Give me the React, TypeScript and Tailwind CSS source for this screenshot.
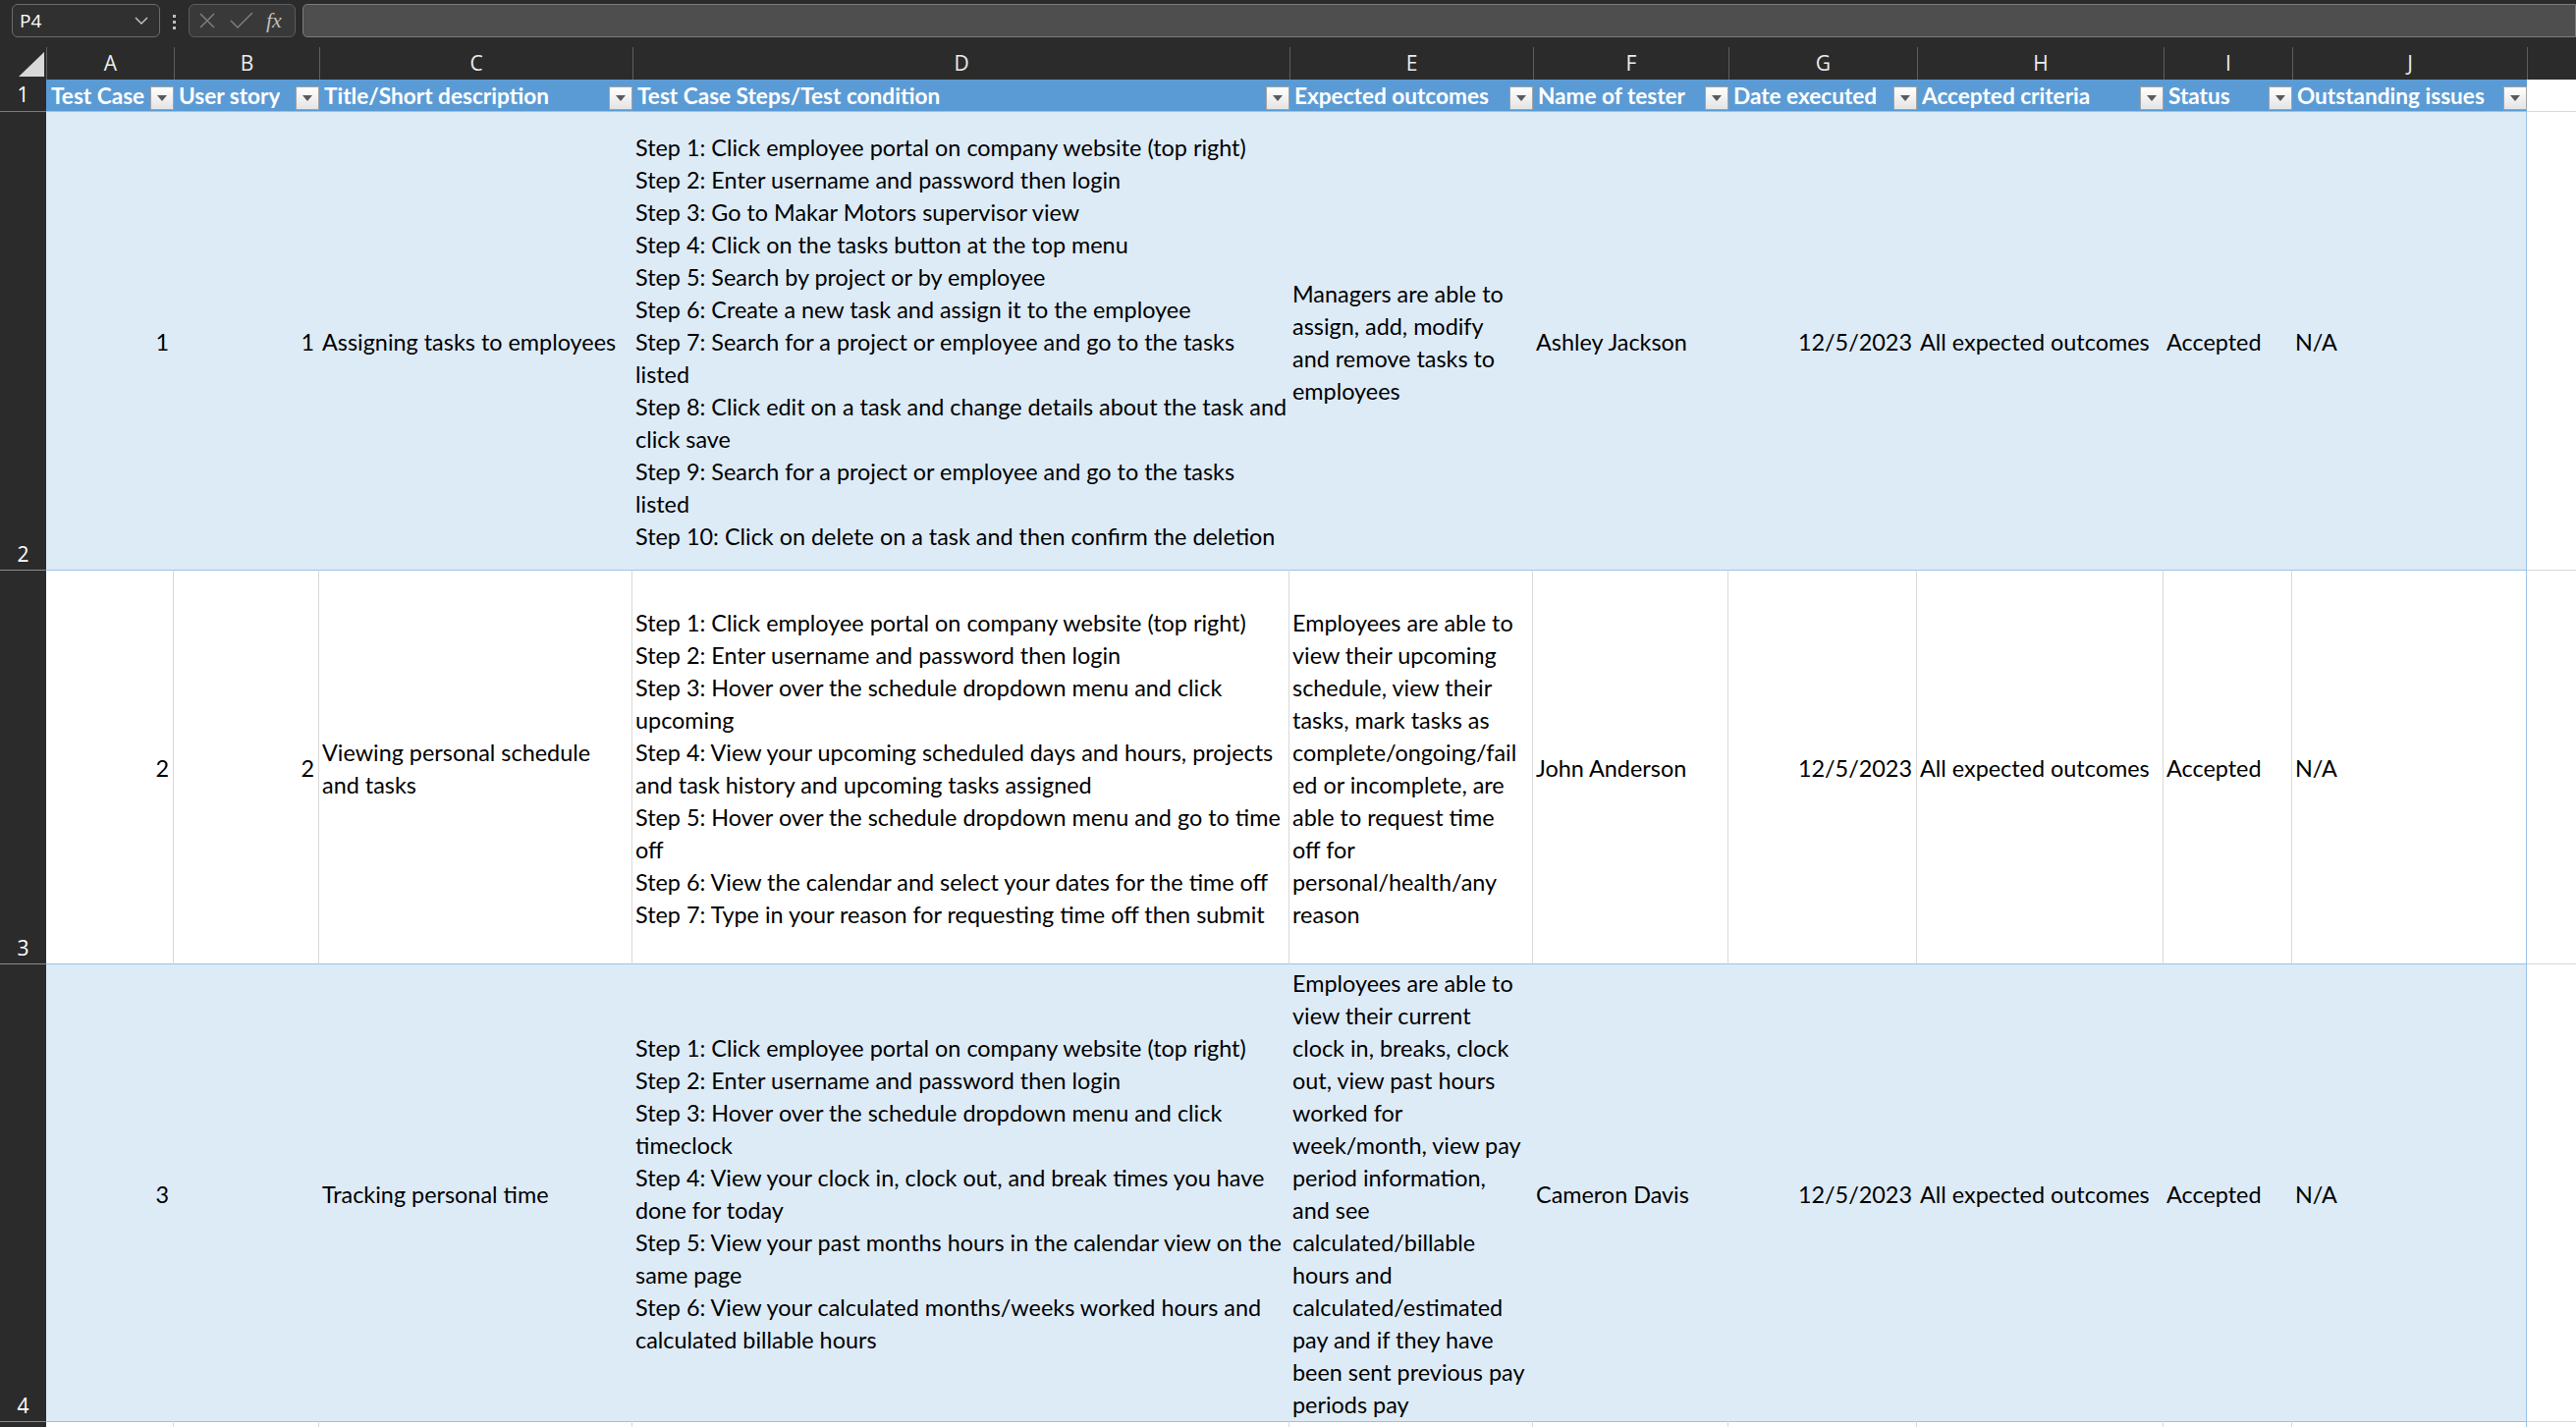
import React from "react";

type Cell = { lines: string[]; right?: boolean };
type Row = { num: string; band: boolean; h: string; cells: Cell[] };

const letters = ["A", "B", "C", "D", "E", "F", "G", "H", "I", "J"];

const headers = [
  "Test Case",
  "User story",
  "Title/Short description",
  "Test Case Steps/Test condition",
  "Expected outcomes",
  "Name of tester",
  "Date executed",
  "Accepted criteria",
  "Status",
  "Outstanding issues",
];

const rows: Row[] = [
  {
    num: "2",
    band: true,
    h: "h-[467px]",
    cells: [
      { lines: ["1"], right: true },
      { lines: ["1"], right: true },
      { lines: ["Assigning tasks to employees"] },
      {
        lines: [
          "Step 1: Click employee portal on company website (top right)",
          "Step 2: Enter username and password then login",
          "Step 3: Go to Makar Motors supervisor view",
          "Step 4: Click on the tasks button at the top menu",
          "Step 5: Search by project or by employee",
          "Step 6: Create a new task and assign it to the employee",
          "Step 7: Search for a project or employee and go to the tasks",
          "listed",
          "Step 8: Click edit on a task and change details about the task and",
          "click save",
          "Step 9: Search for a project or employee and go to the tasks",
          "listed",
          "Step 10: Click on delete on a task and then confirm the deletion",
        ],
      },
      { lines: ["Managers are able to", "assign, add, modify", "and remove tasks to", "employees"] },
      { lines: ["Ashley Jackson"] },
      { lines: ["12/5/2023"], right: true },
      { lines: ["All expected outcomes"] },
      { lines: ["Accepted"] },
      { lines: ["N/A"] },
    ],
  },
  {
    num: "3",
    band: false,
    h: "h-[401px]",
    cells: [
      { lines: ["2"], right: true },
      { lines: ["2"], right: true },
      { lines: ["Viewing personal schedule", "and tasks"] },
      {
        lines: [
          "Step 1: Click employee portal on company website (top right)",
          "Step 2: Enter username and password then login",
          "Step 3: Hover over the schedule dropdown menu and click",
          "upcoming",
          "Step 4: View your upcoming scheduled days and hours, projects",
          "and task history and upcoming tasks assigned",
          "Step 5: Hover over the schedule dropdown menu and go to time",
          "off",
          "Step 6: View the calendar and select your dates for the time off",
          "Step 7: Type in your reason for requesting time off then submit",
        ],
      },
      {
        lines: [
          "Employees are able to",
          "view their upcoming",
          "schedule, view their",
          "tasks, mark tasks as",
          "complete/ongoing/fail",
          "ed or incomplete, are",
          "able to request time",
          "off for",
          "personal/health/any",
          "reason",
        ],
      },
      { lines: ["John Anderson"] },
      { lines: ["12/5/2023"], right: true },
      { lines: ["All expected outcomes"] },
      { lines: ["Accepted"] },
      { lines: ["N/A"] },
    ],
  },
  {
    num: "4",
    band: true,
    h: "h-[466px]",
    cells: [
      { lines: ["3"], right: true },
      { lines: [""], right: true },
      { lines: ["Tracking personal time"] },
      {
        lines: [
          "Step 1: Click employee portal on company website (top right)",
          "Step 2: Enter username and password then login",
          "Step 3: Hover over the schedule dropdown menu and click",
          "timeclock",
          "Step 4: View your clock in, clock out, and break times you have",
          "done for today",
          "Step 5: View your past months hours in the calendar view on the",
          "same page",
          "Step 6: View your calculated months/weeks worked hours and",
          "calculated billable hours",
        ],
      },
      {
        lines: [
          "Employees are able to",
          "view their current",
          "clock in, breaks, clock",
          "out, view past hours",
          "worked for",
          "week/month, view pay",
          "period information,",
          "and see",
          "calculated/billable",
          "hours and",
          "calculated/estimated",
          "pay and if they have",
          "been sent previous pay",
          "periods pay",
        ],
      },
      { lines: ["Cameron Davis"] },
      { lines: ["12/5/2023"], right: true },
      { lines: ["All expected outcomes"] },
      { lines: ["Accepted"] },
      { lines: ["N/A"] },
    ],
  },
];

function FilterButton() {
  return (
    <span className="ml-auto mb-[1px] flex h-[24px] w-[24px] shrink-0 items-center justify-center self-end border border-[#a3a3a3] bg-gradient-to-b from-white to-[#e4e4e4]">
      <svg width="10" height="6" viewBox="0 0 10 6">
        <path d="M0 0h10L5 6z" fill="#5a5a5a" />
      </svg>
    </span>
  );
}

export default function App() {
  return (
    <div className="h-[1453px] w-[2623px] overflow-hidden bg-white font-['Lato','Liberation_Sans',sans-serif] text-[23.4px] text-black">
      {/* formula bar */}
      <div className="flex h-[48px] items-start bg-[#2b2b2b] pt-[4px]">
        <div className="ml-[12px] flex h-[34px] w-[151px] items-center rounded-[6px] border border-[#6b6b6b] bg-[#303030] px-[7px] font-['Open_Sans',sans-serif] text-[19px] text-white">
          P4
          <svg className="ml-auto mr-[4px]" width="14" height="8" viewBox="0 0 14 8">
            <path d="M1 1l6 6 6-6" stroke="#c8c8c8" strokeWidth="1.4" fill="none" />
          </svg>
        </div>
        <div className="ml-[13px] mt-[11px] flex flex-col gap-[3px]">
          <span className="h-[3px] w-[3px] bg-[#bdbdbd]" />
          <span className="h-[3px] w-[3px] bg-[#bdbdbd]" />
          <span className="h-[3px] w-[3px] bg-[#bdbdbd]" />
        </div>
        <div className="ml-[13px] flex h-[34px] w-[109px] items-center rounded-[6px] border border-[#5c5c5c] bg-[#393939] pl-[9px]">
          <svg width="18" height="18" viewBox="0 0 18 18">
            <path d="M2 2l14 14M16 2L2 16" stroke="#7d7d7d" strokeWidth="1.5" />
          </svg>
          <svg className="ml-[14px]" width="24" height="18" viewBox="0 0 24 18">
            <path d="M1 9l7 7L23 1" stroke="#7d7d7d" strokeWidth="1.5" fill="none" />
          </svg>
          <span className="ml-[13px] font-['Liberation_Serif',serif] text-[22px] italic leading-none text-[#bdbdbd]">fx</span>
        </div>
        <div className="ml-[7px] h-[34px] flex-1 rounded-l-[5px] border border-[#7c7c7c] bg-[#4e4e4e]" />
      </div>

      <div className="grid grid-cols-[47px_130px_148px_319px_669px_248px_199px_192px_251px_131px_239px_1fr]">
        {/* column letters */}
        <div className="relative h-[33px] bg-[#2b2b2b]">
          <svg className="absolute left-[19px] top-[5px]" width="26" height="25" viewBox="0 0 26 25">
            <path d="M0 25H26V0z" fill="#d9d9d9" />
          </svg>
        </div>
        {letters.map((l) => (
          <div key={l} className="flex h-[33px] items-center justify-center border-l border-[#5e5e5e] bg-[#2b2b2b] font-['Open_Sans',sans-serif] text-[21px] text-[#ececec]">
            {l}
          </div>
        ))}
        <div className="h-[33px] border-l border-[#5e5e5e] bg-[#2b2b2b]" />

        {/* row 1 headers */}
        <div className="flex h-[33px] items-center justify-center border-b border-[#7a7a7a] bg-[#2b2b2b] font-['Open_Sans',sans-serif] text-[21px] text-white">
          1
        </div>
        {headers.map((h) => (
          <div key={h} className="flex h-[33px] items-stretch overflow-hidden whitespace-nowrap border-b border-[#9bc2e6] bg-[#5b9bd5] pl-[5px] text-[22.6px] font-bold leading-[34px] text-white">
            <span className="overflow-hidden">{h}</span>
            <FilterButton />
          </div>
        ))}
        <div className="h-[33px] border-b border-[#d9d9d9] bg-white" />

        {/* data rows */}
        {rows.map((row) => (
          <React.Fragment key={row.num}>
            <div className={`${row.h} flex items-end justify-center border-b border-[#8a8a8a] bg-[#2b2b2b] font-['Open_Sans',sans-serif] text-[21px] leading-[32px] text-white`}>
              {row.num}
            </div>
            {row.cells.map((c, i) => (
              <div
                key={i}
                className={`${row.h} flex flex-col justify-center overflow-hidden whitespace-pre border-b border-r border-b-[#9bc2e6] pt-[3px] leading-[33px] ${
                  row.band ? "bg-[#ddebf7]" : "bg-white"
                } ${
                  i === 9 ? "border-r-[#9bc2e6]" : row.band ? "border-r-[#ddebf7]" : "border-r-[#d9d9d9]"
                } ${c.right ? "items-end pr-[4px]" : "items-start pl-[3px]"}`}
              >
                {c.lines.map((line, j) => (
                  <span key={j}>{line}</span>
                ))}
              </div>
            ))}
            <div className={`${row.h} border-b border-[#d9d9d9] bg-white`} />
          </React.Fragment>
        ))}

        {/* row 5 */}
        <div className="h-[40px] bg-[#2b2b2b]" />
        {letters.map((l, i) => (
          <div key={l} className={`h-[40px] border-r ${i === 9 ? "border-[#9bc2e6]" : "border-[#d9d9d9]"}`} />
        ))}
        <div className="h-[40px]" />
      </div>
    </div>
  );
}
